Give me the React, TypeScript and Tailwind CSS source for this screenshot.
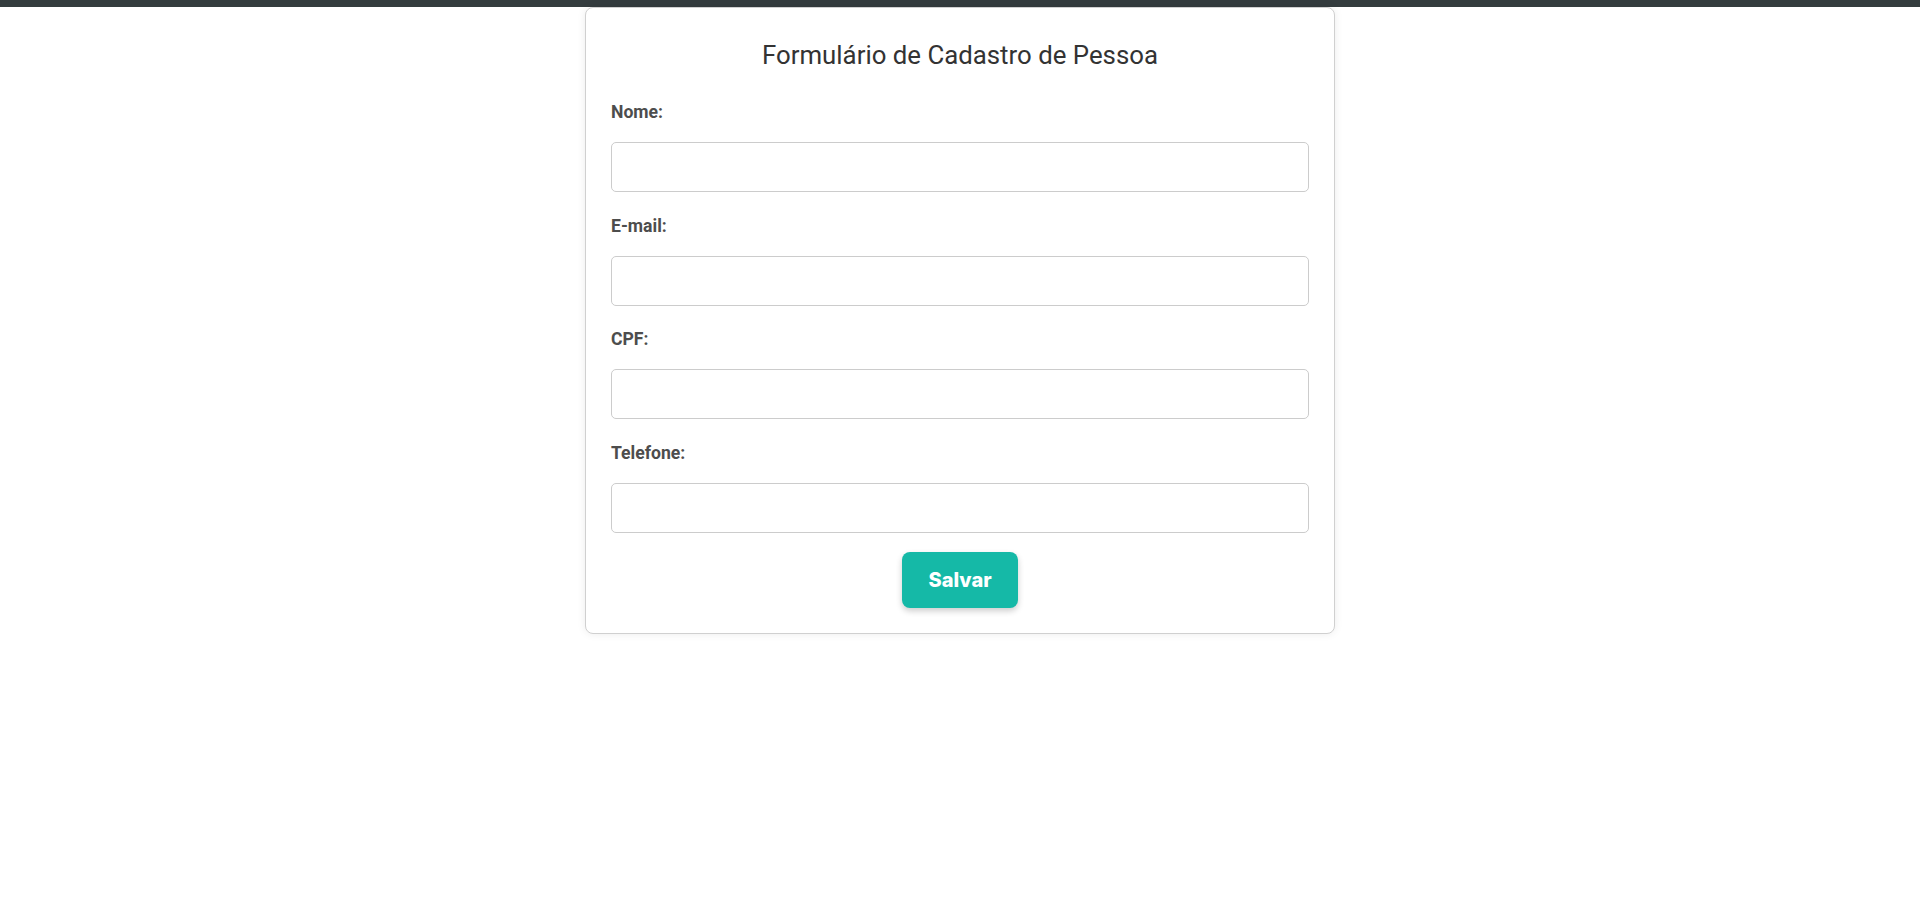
import React from "react";

const fields = [
  { id: "nome", label: "Nome:", type: "text" },
  { id: "email", label: "E-mail:", type: "email" },
  { id: "cpf", label: "CPF:", type: "text" },
  { id: "telefone", label: "Telefone:", type: "tel" },
];

const App = () => {
  return (
    <div className="min-h-screen bg-white font-['Roboto',sans-serif]">
      <div className="h-[7px] bg-[#343c3e]"></div>
      <div className="w-[750px] mx-auto bg-white border border-[#d0d0d0] rounded-lg shadow-[0_0_8px_rgba(0,0,0,0.08)] p-[25px]">
        <h2 className="mt-[7px] text-center text-[25.8px] leading-[30px] text-[#333]">
          Formulário de Cadastro de Pessoa
        </h2>
        <form className="mt-[30px] flex flex-col">
          {fields.map((f, i) => (
            <div
              key={f.id}
              className={`flex flex-col ${i < fields.length - 1 ? "mb-[21.5px]" : ""}`}
            >
              <label
                htmlFor={f.id}
                className="text-[17.6px] leading-[24px] font-bold text-[#4d4d4d]"
              >
                {f.label}
              </label>
              <input
                id={f.id}
                type={f.type}
                className="mt-[18px] h-[50px] w-full border border-[#cccccc] rounded-[5px] px-3 text-[16px] outline-none"
              />
            </div>
          ))}
          <div className="mt-[19.5px] flex justify-center">
            <button
              type="button"
              className="w-[116px] h-[56px] rounded-lg bg-[#15b9a7] text-white font-['Inter',sans-serif] font-extrabold text-[20px] shadow-[0_3px_6px_rgba(0,0,0,0.2)]"
            >
              Salvar
            </button>
          </div>
        </form>
      </div>
    </div>
  );
};

export default App;
